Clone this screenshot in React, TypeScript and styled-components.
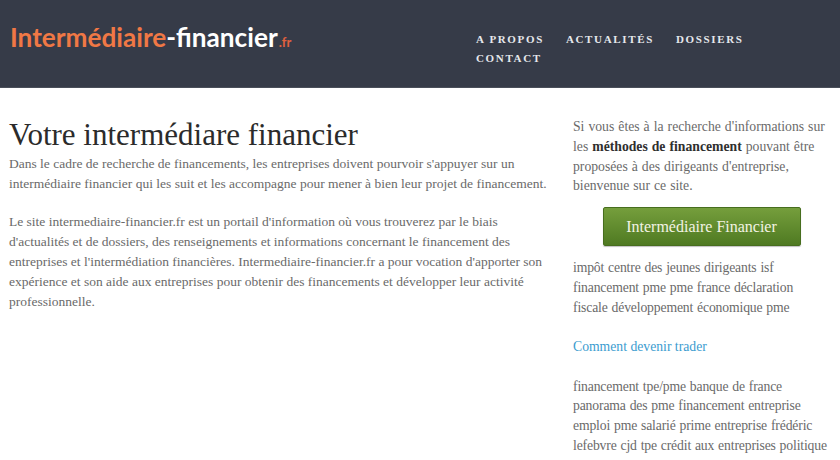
import React from "react";
import styled, { createGlobalStyle } from "styled-components";

const Global = createGlobalStyle`
  html, body { margin: 0; padding: 0; background: #fff; }
  body { font-family: "Liberation Serif", "Times New Roman", serif; }
  * { box-sizing: border-box; }
`;

const Header = styled.header`
  height: 88px;
  background: #363b48;
  border-bottom: 1px solid #4a4f5a;
  display: flex;
  align-items: flex-start;
  padding: 0 0 0 10px;
`;

const Logo = styled.div`
  font-family: "Lato", "Open Sans", sans-serif;
  font-weight: 700;
  font-size: 26.2px;
  margin-top: 21px;
  width: 466px;
  white-space: nowrap;
`;

const LogoOrange = styled.span`
  color: #f07845;
`;
const LogoWhite = styled.span`
  color: #ffffff;
`;
const LogoFr = styled.span`
  color: #e0613e;
  font-size: 13px;
  margin-left: 1px;
`;

const Nav = styled.nav`
  display: flex;
  flex-wrap: wrap;
  width: 300px;
  column-gap: 22px;
  row-gap: 0;
  margin-top: 30px;
`;

const NavItem = styled.a`
  font-family: "Liberation Serif", serif;
  font-weight: 700;
  font-size: 11px;
  letter-spacing: 1.65px;
  color: #e6e8ec;
  text-transform: uppercase;
  line-height: 19px;
  text-decoration: none;
`;

const Page = styled.div`
  display: flex;
  padding: 0 0 0 9px;
  gap: 19px;
`;

const Main = styled.main`
  width: 545px;
  padding-top: 28px;
`;

const Title = styled.h1`
  font-family: "Liberation Serif", serif;
  font-weight: 400;
  font-size: 31px;
  color: #2b2b2b;
  margin: 0 0 1px 0;
  line-height: 37px;
`;

const Para = styled.p`
  font-size: 13.5px;
  line-height: 20px;
  color: #6a6a6a;
  margin: 0 0 18px 0;
`;

const Side = styled.aside`
  width: 257px;
  padding-top: 29px;
`;

const SideText = styled.p<{ $gap?: number; $tight?: boolean }>`
  font-size: 13.7px;
  line-height: 19.8px;
  word-spacing: 0.6px;
  letter-spacing: ${(p) => (p.$tight ? "-0.15px" : "0")};
  color: #6a6a6a;
  margin: 0 0 ${(p) => p.$gap ?? 19}px 0;
`;

const Strong = styled.b`
  color: #2f2f2f;
`;

const ButtonWrap = styled.div`
  display: flex;
  justify-content: center;
  margin: 0 0 12px 0;
`;

const GreenButton = styled.a`
  width: 198px;
  height: 39px;
  display: flex;
  align-items: center;
  justify-content: center;
  background: linear-gradient(#759e3c, #4f7a22);
  border: 1px solid #476e1e;
  border-radius: 2px;
  color: #f3f3e4;
  font-size: 16px;
  text-decoration: none;
  box-shadow: 0 1px 1px rgba(0,0,0,0.25);
`;

const SideLink = styled.a`
  display: block;
  font-size: 13.7px;
  line-height: 20px;
  color: #3b9ccf;
  text-decoration: none;
  margin: 0 0 20px 0;
`;

export default function App() {
  return (
    <>
      <Global />
      <Header>
        <Logo>
          <LogoOrange>Intermédiaire</LogoOrange>
          <LogoWhite>-financier</LogoWhite>
          <LogoFr>.fr</LogoFr>
        </Logo>
        <Nav>
          <NavItem>A propos</NavItem>
          <NavItem>Actualités</NavItem>
          <NavItem>Dossiers</NavItem>
          <NavItem>Contact</NavItem>
        </Nav>
      </Header>
      <Page>
        <Main>
          <Title>Votre intermédiare financier</Title>
          <Para>
            Dans le cadre de recherche de financements, les entreprises doivent pourvoir s'appuyer sur un
            intermédiaire financier qui les suit et les accompagne pour mener à bien leur projet de financement.
          </Para>
          <Para>
            Le site intermediaire-financier.fr est un portail d'information où vous trouverez par le biais
            d'actualités et de dossiers, des renseignements et informations concernant le financement des
            entreprises et l'intermédiation financières. Intermediaire-financier.fr a pour vocation d'apporter son
            expérience et son aide aux entreprises pour obtenir des financements et développer leur activité
            professionnelle.
          </Para>
        </Main>
        <Side>
          <SideText $gap={11}>
            Si vous êtes à la recherche d'informations sur les <Strong>méthodes de financement</Strong> pouvant être
            proposées à des dirigeants d'entreprise, bienvenue sur ce site.
          </SideText>
          <ButtonWrap>
            <GreenButton>Intermédiaire Financier</GreenButton>
          </ButtonWrap>
          <SideText $tight>
            impôt centre des jeunes dirigeants isf financement pme pme france déclaration fiscale développement
            économique pme
          </SideText>
          <SideLink>Comment devenir trader</SideLink>
          <SideText $tight>
            financement tpe/pme banque de france panorama des pme financement entreprise emploi pme salarié prime
            entreprise frédéric lefebvre cjd tpe crédit aux entreprises politique
          </SideText>
        </Side>
      </Page>
    </>
  );
}
